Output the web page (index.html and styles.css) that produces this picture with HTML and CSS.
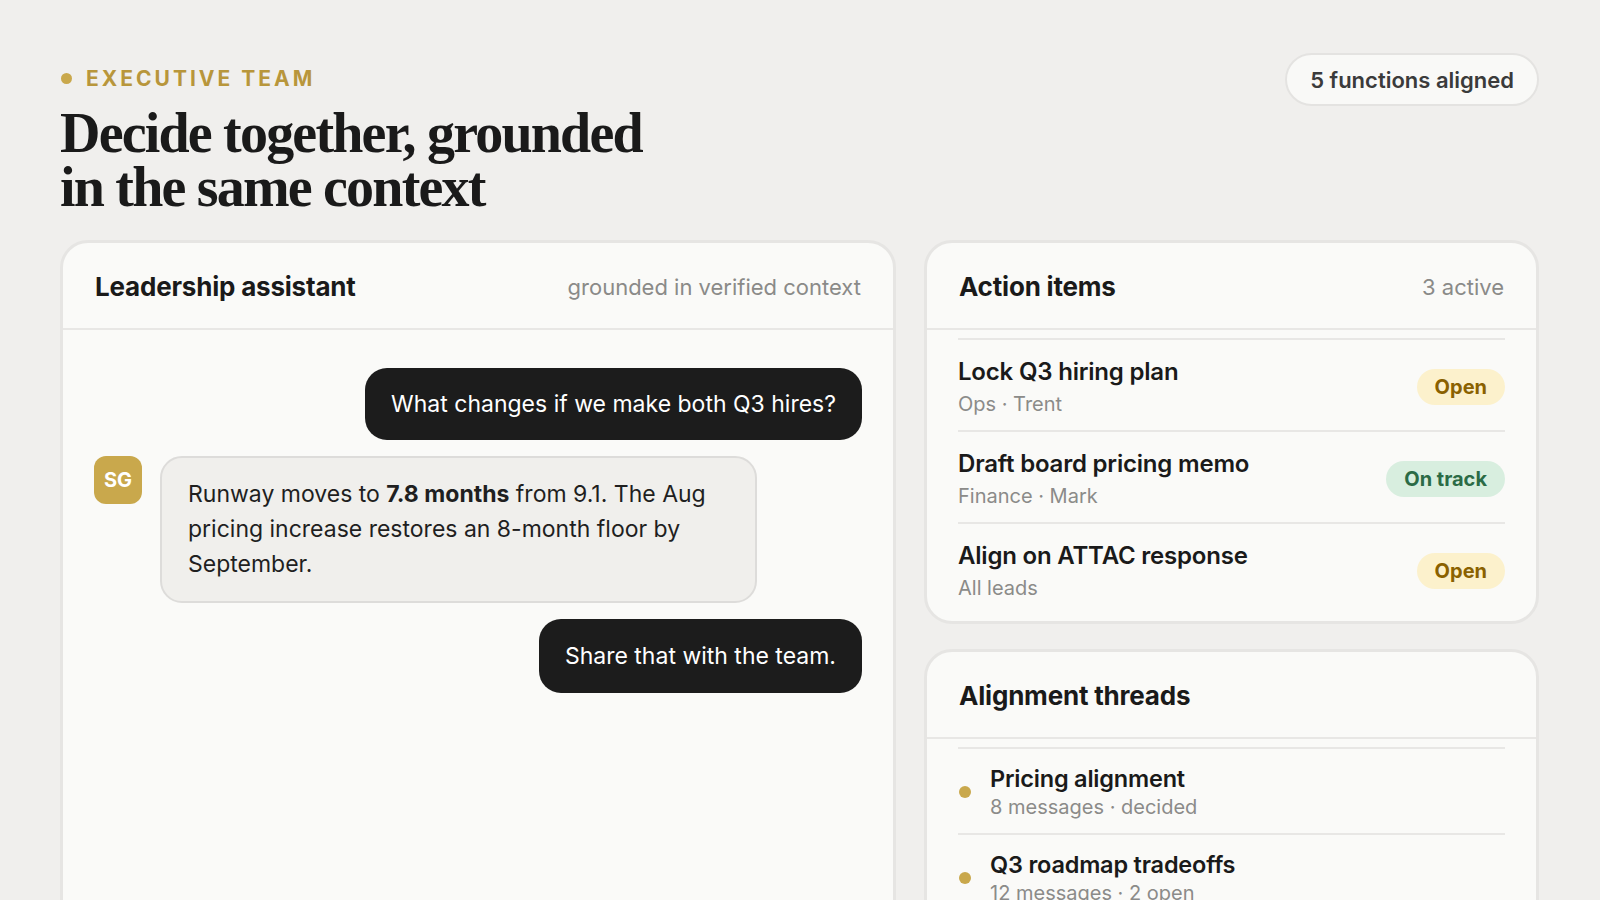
FILE: index.html
```html
<!DOCTYPE html>
<html lang="en">
<head>
    <meta charset="UTF-8">
    <meta name="viewport" content="width=device-width, initial-scale=1.0">
    <title>Executive team</title>
    <link rel="stylesheet" href="styles.css">
</head>
<body>
    <div class="page">
        <header class="top">
            <div class="intro">
                <div class="eyebrow"><span class="eyebrow-dot"></span>EXECUTIVE TEAM</div>
                <h1>Decide together, grounded<br>in the same context</h1>
            </div>
            <div class="pill">5 functions aligned</div>
        </header>

        <main class="board">
            <!-- 对话区 -->
            <section class="card chat-card">
                <div class="card-head">
                    <h2>Leadership assistant</h2>
                    <span class="card-note">grounded in verified context</span>
                </div>
                <div class="chat">
                    <div class="msg user">
                        <div class="bubble">What changes if we make both Q3 hires?</div>
                    </div>
                    <div class="msg bot">
                        <div class="avatar">SG</div>
                        <div class="bubble">Runway moves to <strong>7.8 months</strong> from 9.1. The Aug pricing increase restores an 8-month floor by September.</div>
                    </div>
                    <div class="msg user">
                        <div class="bubble">Share that with the team.</div>
                    </div>
                </div>
            </section>

            <div class="side">
                <!-- 待办 -->
                <section class="card actions-card">
                    <div class="card-head">
                        <h2>Action items</h2>
                        <span class="card-note">3 active</span>
                    </div>
                    <ul class="list">
                        <li class="item">
                            <div class="item-text">
                                <div class="item-title">Lock Q3 hiring plan</div>
                                <div class="item-meta">Ops · Trent</div>
                            </div>
                            <span class="badge open">Open</span>
                        </li>
                        <li class="item">
                            <div class="item-text">
                                <div class="item-title">Draft board pricing memo</div>
                                <div class="item-meta">Finance · Mark</div>
                            </div>
                            <span class="badge track">On track</span>
                        </li>
                        <li class="item">
                            <div class="item-text">
                                <div class="item-title">Align on ATTAC response</div>
                                <div class="item-meta">All leads</div>
                            </div>
                            <span class="badge open">Open</span>
                        </li>
                    </ul>
                </section>

                <!-- 讨论串 -->
                <section class="card threads-card">
                    <div class="card-head">
                        <h2>Alignment threads</h2>
                    </div>
                    <ul class="list">
                        <li class="item thread">
                            <span class="thread-dot"></span>
                            <div class="item-text">
                                <div class="item-title">Pricing alignment</div>
                                <div class="item-meta">8 messages · decided</div>
                            </div>
                        </li>
                        <li class="item thread">
                            <span class="thread-dot"></span>
                            <div class="item-text">
                                <div class="item-title">Q3 roadmap tradeoffs</div>
                                <div class="item-meta">12 messages · 2 open</div>
                            </div>
                        </li>
                    </ul>
                </section>
            </div>
        </main>
    </div>
</body>
</html>
```

FILE: styles.css
```css
* {
    box-sizing: border-box;
}
html, body {
    margin: 0;
    height: 900px;
    overflow: hidden;
}
body {
    font-family: Inter, 'Noto Sans', sans-serif;
    background-color: #f0efed;
    color: #1a1a1a;
}
.page {
    padding: 53px 61px 0 60px;
}
.top {
    display: flex;
    justify-content: space-between;
    align-items: flex-start;
}
.eyebrow {
    display: flex;
    align-items: center;
    height: 50px;
    font-size: 21px;
    font-weight: 700;
    letter-spacing: 3px;
    color: #b8963b;
}
.eyebrow-dot {
    width: 11px;
    height: 11px;
    border-radius: 50%;
    background-color: #c9a84c;
    margin-left: 1px;
    margin-right: 14px;
}
h1 {
    margin: 3px 0 0;
    font-family: 'Liberation Serif', 'DejaVu Serif', serif;
    font-size: 56px;
    line-height: 54px;
    font-weight: 700;
    letter-spacing: -1.8px;
    color: #1a1a1a;
}
.pill {
    height: 53px;
    display: flex;
    align-items: center;
    padding: 0 23px;
    border: 2px solid #e4e3e1;
    border-radius: 27px;
    background-color: #f9f9f7;
    font-size: 22px;
    font-weight: 600;
    color: #3b3b3b;
}
.board {
    display: grid;
    grid-template-columns: 836px 1fr;
    gap: 28px;
    margin-top: 26px;
    align-items: start;
}
.card {
    background-color: #fafaf8;
    border: 3px solid #e6e5e3;
    border-radius: 28px;
}
.chat-card {
    height: 720px;
}
.card-head {
    height: 87px;
    display: flex;
    justify-content: space-between;
    align-items: center;
    padding: 2px 32px 0 32px;
    border-bottom: 2px solid #e8e7e5;
}
.card-head h2 {
    margin: 0;
    font-size: 26px;
    font-weight: 700;
    letter-spacing: -0.2px;
}
.card-note {
    font-size: 22px;
    color: #8a8a88;
}
.chat {
    display: flex;
    flex-direction: column;
    gap: 16px;
    padding: 38px 31px 0 31px;
}
.msg {
    display: flex;
    align-items: flex-start;
}
.msg.user {
    justify-content: flex-end;
}
.bubble {
    font-size: 23px;
    line-height: 34px;
    border-radius: 22px;
}
.user .bubble {
    background-color: #1c1c1c;
    color: #fff;
    padding: 19px 26px;
}
.user:last-child .bubble {
    padding: 20px 26px;
}
.bot .bubble {
    max-width: 597px;
    background-color: #f0efec;
    border: 2px solid #dddcda;
    padding: 19px 26px;
    line-height: 35px;
    color: #1f1f1f;
}
.bot .bubble strong {
    font-weight: 700;
}
.avatar {
    flex: none;
    width: 48px;
    height: 48px;
    border-radius: 12px;
    background-color: #c9a84c;
    color: #fff;
    font-size: 20px;
    font-weight: 700;
    display: flex;
    align-items: center;
    justify-content: center;
    margin-right: 18px;
}
.side {
    display: flex;
    flex-direction: column;
    gap: 25px;
}
.list {
    list-style: none;
    margin: 0;
    padding: 8px 31px 7px 31px;
}
.item {
    display: flex;
    align-items: center;
    justify-content: space-between;
    border-top: 2px solid #e8e7e5;
    padding: 17px 0 13px;
}
.item-title {
    font-size: 24px;
    line-height: 30px;
    font-weight: 600;
    letter-spacing: -0.2px;
}
.item-meta {
    margin-top: 4px;
    font-size: 20px;
    line-height: 26px;
    color: #8b8b89;
}
.badge {
    height: 36px;
    display: flex;
    align-items: center;
    padding: 0 18px;
    border-radius: 18px;
    font-size: 20px;
    font-weight: 700;
}
.badge.open {
    background-color: #fcf1cc;
    color: #8a6100;
}
.badge.track {
    background-color: #d8eedf;
    color: #2b6b46;
}
.thread {
    justify-content: flex-start;
    padding: 15px 0 13px;
}
.thread .item-title {
    font-size: 23.5px;
}
.thread .item-meta {
    margin-top: 0;
}
.thread-dot {
    flex: none;
    width: 12px;
    height: 12px;
    border-radius: 50%;
    background-color: #c9a84c;
    margin-left: 1px;
    margin-right: 19px;
}
```
